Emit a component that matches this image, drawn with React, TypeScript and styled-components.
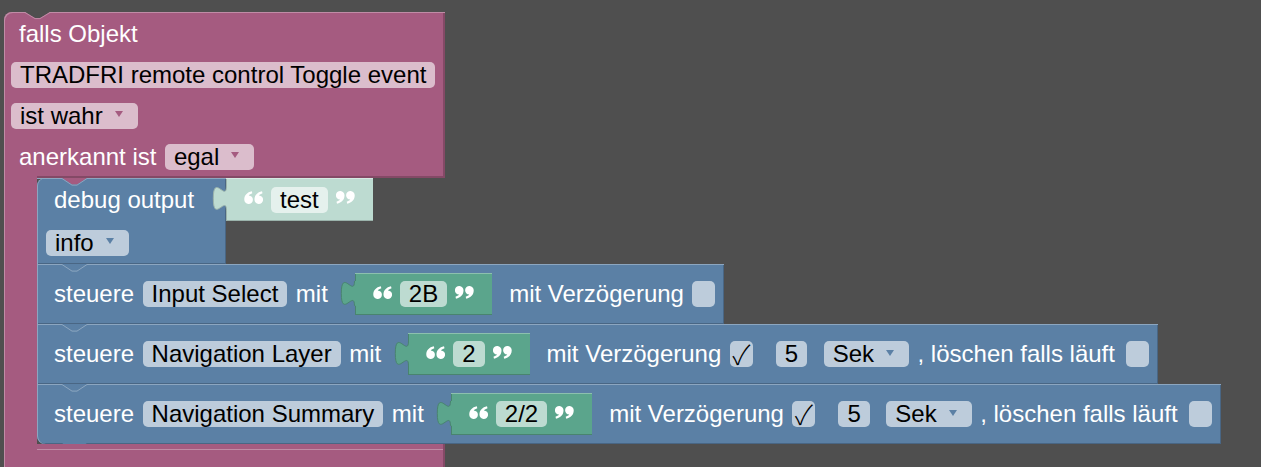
import React from "react"
import styled, { createGlobalStyle } from "styled-components"

type Tone = "purple" | "blue" | "green" | "shadow"

const palette: Record<Tone, { base: string; light: string; dark: string; field: string }> = {
    purple: { base: "#a55b80", light: "#c08ca6", dark: "#844966", field: "#dbbdcc" },
    blue: { base: "#5b80a5", light: "#8ca6c0", dark: "#496684", field: "#bdccdb" },
    green: { base: "#5ba58c", light: "#8cc0ae", dark: "#49846f", field: "#bddbd1" },
    shadow: { base: "#bddbd1", light: "#d7e9e3", dark: "#9bb3ab", field: "#e5f1ed" },
}

const workspaceBg = "#4f4f4f"

const GlobalStyle = createGlobalStyle`
    html, body {
        margin: 0;
        background: ${workspaceBg};
        font-family: "Liberation Sans", Arial, sans-serif;
        font-size: 24px;
    }
`

const Canvas = styled.div`
    box-sizing: border-box;
    height: 467px;
    overflow: hidden;
    padding: 12px 0 0 4px;
`

const ControlBlock = styled.div`
    position: relative;
    width: 441px;
    display: flex;
    flex-direction: column;
`

const Header = styled.div`
    position: relative;
    padding: 1px 0;
    background: ${palette.purple.base};
    border-top-left-radius: 8px;
    box-shadow: inset 1px 1px 0 ${palette.purple.light}, inset -2px 0 0 ${palette.purple.dark};

    &::after {
        content: "";
        position: absolute;
        left: 33px;
        right: 0;
        bottom: 0;
        height: 2px;
        background: ${palette.purple.dark};
    }
`

const HeaderRow = styled.div`
    display: flex;
    align-items: center;
    gap: 8.5px;
    height: 41px;
    padding-left: 7px;
`

const Mouth = styled.div`
    display: flex;
`

const Arm = styled.div`
    flex-shrink: 0;
    width: 33px;
    background: ${palette.purple.base};
    box-shadow: inset 1px 0 0 ${palette.purple.light};
`

const Foot = styled.div`
    position: relative;
    height: 40px;
    background: ${palette.purple.base};
    box-shadow: inset 1px 0 0 ${palette.purple.light}, inset -2px 0 0 ${palette.purple.dark};

    &::before {
        content: "";
        position: absolute;
        left: 33px;
        right: 2px;
        top: 5px;
        height: 1px;
        background: ${palette.purple.light};
    }
`

const Stack = styled.div`
    display: flex;
    flex-direction: column;
    align-items: flex-start;
`

const Label = styled.span<{ $lead?: boolean }>`
    color: #fff;
    white-space: pre;
    line-height: 26px;
    margin-left: ${p => (p.$lead ? "8px" : "0")};
`

const Pill = styled.span<{ $tone: Tone; $shift?: number; $drop?: boolean }>`
    display: inline-flex;
    align-items: center;
    box-sizing: border-box;
    height: 26px;
    padding: 0 ${p => (p.$drop ? "15px" : "9px")} 0 9px;
    margin-left: ${p => p.$shift ?? 0}px;
    border-radius: 5px;
    background: ${p => palette[p.$tone].field};
    color: #000;
    white-space: pre;
`

const Caret = styled.span<{ $tone: Tone }>`
    width: 0;
    height: 0;
    margin: -3px 0 0 12px;
    border-left: 4px solid transparent;
    border-right: 4px solid transparent;
    border-top: 6px solid ${p => palette[p.$tone].base};
`

const Checkbox = styled.span<{ $shift?: number }>`
    display: inline-flex;
    align-items: center;
    justify-content: center;
    width: 23px;
    height: 26px;
    margin-left: ${p => p.$shift ?? 0}px;
    border-radius: 5px;
    background: ${palette.blue.field};
    color: #000;
    font-family: "DejaVu Sans ExtraLight", "Noto Sans CJK JP", "DejaVu Sans", sans-serif;
    font-weight: 300;
    font-size: 27px;
    line-height: 26px;
    overflow: visible;
`

const StatementBlock = styled.div<{ $last?: boolean }>`
    position: relative;
    box-sizing: border-box;
    display: flex;
    align-items: center;
    gap: 8.5px;
    height: 60px;
    padding: 0 8.5px 0 9px;
    background: ${palette.blue.base};
    border-bottom-left-radius: ${p => (p.$last ? "8px" : "0")};
    box-shadow: inset 1px 0 0 ${palette.blue.light}, inset -1px -1px 0 ${palette.blue.dark};
`

const DebugBlock = styled.div`
    display: flex;
    align-items: flex-start;
`

const DebugBody = styled.div`
    position: relative;
    box-sizing: border-box;
    width: 189px;
    height: 86px;
    background: ${palette.blue.base};
    border-top-left-radius: 8px;
    box-shadow: inset 1px 0 0 ${palette.blue.light}, inset -1px -1px 0 ${palette.blue.dark};
`

const DebugRow = styled.div`
    display: flex;
    align-items: center;
    height: 43px;
    padding-left: 9px;
`

const ValueBlock = styled.div<{ $tone: Tone; $attached?: boolean }>`
    position: relative;
    box-sizing: border-box;
    display: flex;
    align-items: center;
    gap: 8px;
    height: ${p => (p.$attached ? "43px" : "42px")};
    padding: 0 18px;
    margin: ${p => (p.$attached ? "0" : "0 8.5px 0 18.5px")};
    background: ${p => palette[p.$tone].base};
    box-shadow: inset 0 1px 0 ${p => palette[p.$tone].light}, inset 1px -1px 0 ${p => palette[p.$tone].dark};
`

const TabSvg = styled.svg`
    position: absolute;
    left: -13.5px;
    top: 8px;
    overflow: visible;
`

const EdgeSvg = styled.svg`
    position: absolute;
    left: 0;
    top: 0;
    pointer-events: none;
`

const BottomTabSvg = styled.svg`
    position: absolute;
    left: 25px;
    bottom: -7px;
    overflow: visible;
`

const QuoteSvg = styled.svg<{ $close?: boolean }>`
    flex-shrink: 0;
    margin-top: -4px;
    transform: ${p => (p.$close ? "rotate(180deg)" : "none")};
`

// puzzle tab on the left side of a value block
const Tab = ({ tone }: { tone: Tone }) => {
    const c = palette[tone]
    const curve = "M 13.5 0 c 0 16.5 -13.2 -13.2 -13.2 12.4 s 13.2 -4.1 13.2 12.4"
    return (
        <TabSvg width="15" height="25">
            <path d={curve + " H 15 V 0 Z"} fill={c.base} />
            <path d={curve} fill="none" stroke={c.dark} strokeWidth="1" />
        </TabSvg>
    )
}

// the quote images of the text block
const Quote = ({ close }: { close?: boolean }) => {
    const mark = "M 0.3 8.4 C 0.3 4.2 3.2 1.2 7.8 0.2 L 8.3 2.2 C 6 3 5 4 4.8 4.4 A 4.3 4.3 0 1 1 0.3 8.4 Z"
    return (
        <QuoteSvg $close={close} width="19" height="13" viewBox="0 0 19 13">
            <path d={mark} fill="#fff" />
            <path d={mark} fill="#fff" transform="translate(10.2 0)" />
        </QuoteSvg>
    )
}

const TextValue = ({ value, tone, attached }: { value: string; tone: Tone; attached?: boolean }) => (
    <ValueBlock $tone={tone} $attached={attached}>
        <Tab tone={tone} />
        <Quote />
        <Pill $tone={tone}>{value}</Pill>
        <Quote close />
    </ValueBlock>
)

// highlight line along the top edge, dipping into the notch
const TopNotch = ({ fill }: { fill?: string }) => (
    <EdgeSvg width="100%" height="8">
        {fill && <polygon points="25,0 35,6.6 40,6.6 50,0" fill={fill} />}
        <polyline
            points="0,0.5 25,0.5 35,7.1 40,7.1 50,0.5 3000,0.5"
            fill="none"
            stroke={palette.blue.light}
            strokeWidth="1"
        />
    </EdgeSvg>
)

const HeadNotch = () => (
    <EdgeSvg width="100%" height="8">
        <polygon points="21,0 31,6.1 36,6.1 46,0" fill={workspaceBg} />
        <polyline points="21,0.5 31,6.6 36,6.6 46,0.5" fill="none" stroke={palette.purple.light} strokeWidth="1" />
    </EdgeSvg>
)

const BottomTab = () => (
    <BottomTabSvg width="25" height="7">
        <polygon points="0,-1 10,6.6 15,6.6 25,-1" fill={palette.blue.base} />
        <polyline points="0,0 10,6.6 15,6.6 25,0" fill="none" stroke={palette.blue.dark} strokeWidth="1" />
    </BottomTabSvg>
)

const Dropdown = ({ tone, children, shift }: { tone: Tone; children: string; shift?: number }) => (
    <Pill $tone={tone} $drop $shift={shift}>
        {children}
        <Caret $tone={tone} />
    </Pill>
)

interface ControlRow {
    target: string
    value: string
    clearable: boolean
}

const rows: ControlRow[] = [
    { target: "Input Select", value: "2B", clearable: false },
    { target: "Navigation Layer", value: "2", clearable: true },
    { target: "Navigation Summary", value: "2/2", clearable: true },
]

export default function App() {
    return (
        <>
            <GlobalStyle />
            <Canvas>
                <ControlBlock>
                    <Header>
                        <HeadNotch />
                        <HeaderRow>
                            <Label $lead>falls Objekt</Label>
                        </HeaderRow>
                        <HeaderRow>
                            <Pill $tone="purple">TRADFRI remote control Toggle event</Pill>
                        </HeaderRow>
                        <HeaderRow>
                            <Dropdown tone="purple">ist wahr</Dropdown>
                        </HeaderRow>
                        <HeaderRow>
                            <Label $lead>anerkannt ist</Label>
                            <Dropdown tone="purple">egal</Dropdown>
                        </HeaderRow>
                    </Header>
                    <Mouth>
                        <Arm />
                        <Stack>
                            <DebugBlock>
                                <DebugBody>
                                    <TopNotch fill={palette.purple.base} />
                                    <DebugRow>
                                        <Label $lead>debug output</Label>
                                    </DebugRow>
                                    <DebugRow>
                                        <Dropdown tone="blue">info</Dropdown>
                                    </DebugRow>
                                </DebugBody>
                                <TextValue value="test" tone="shadow" attached />
                            </DebugBlock>
                            {rows.map((row, i) => (
                                <StatementBlock key={row.target} $last={i === rows.length - 1}>
                                    <TopNotch />
                                    <Label $lead>steuere</Label>
                                    <Pill $tone="blue">{row.target}</Pill>
                                    <Label>mit</Label>
                                    <TextValue value={row.value} tone="green" />
                                    <Label>mit Verzögerung</Label>
                                    {row.clearable ? (
                                        <>
                                            <Checkbox>✓</Checkbox>
                                            <Pill $tone="blue" $shift={14.5}>5</Pill>
                                            <Dropdown tone="blue" shift={8}>Sek</Dropdown>
                                            <Label>, löschen falls läuft</Label>
                                            <Checkbox $shift={3} />
                                        </>
                                    ) : (
                                        <Checkbox />
                                    )}
                                    {i === rows.length - 1 && <BottomTab />}
                                </StatementBlock>
                            ))}
                        </Stack>
                    </Mouth>
                    <Foot />
                </ControlBlock>
            </Canvas>
        </>
    )
}
